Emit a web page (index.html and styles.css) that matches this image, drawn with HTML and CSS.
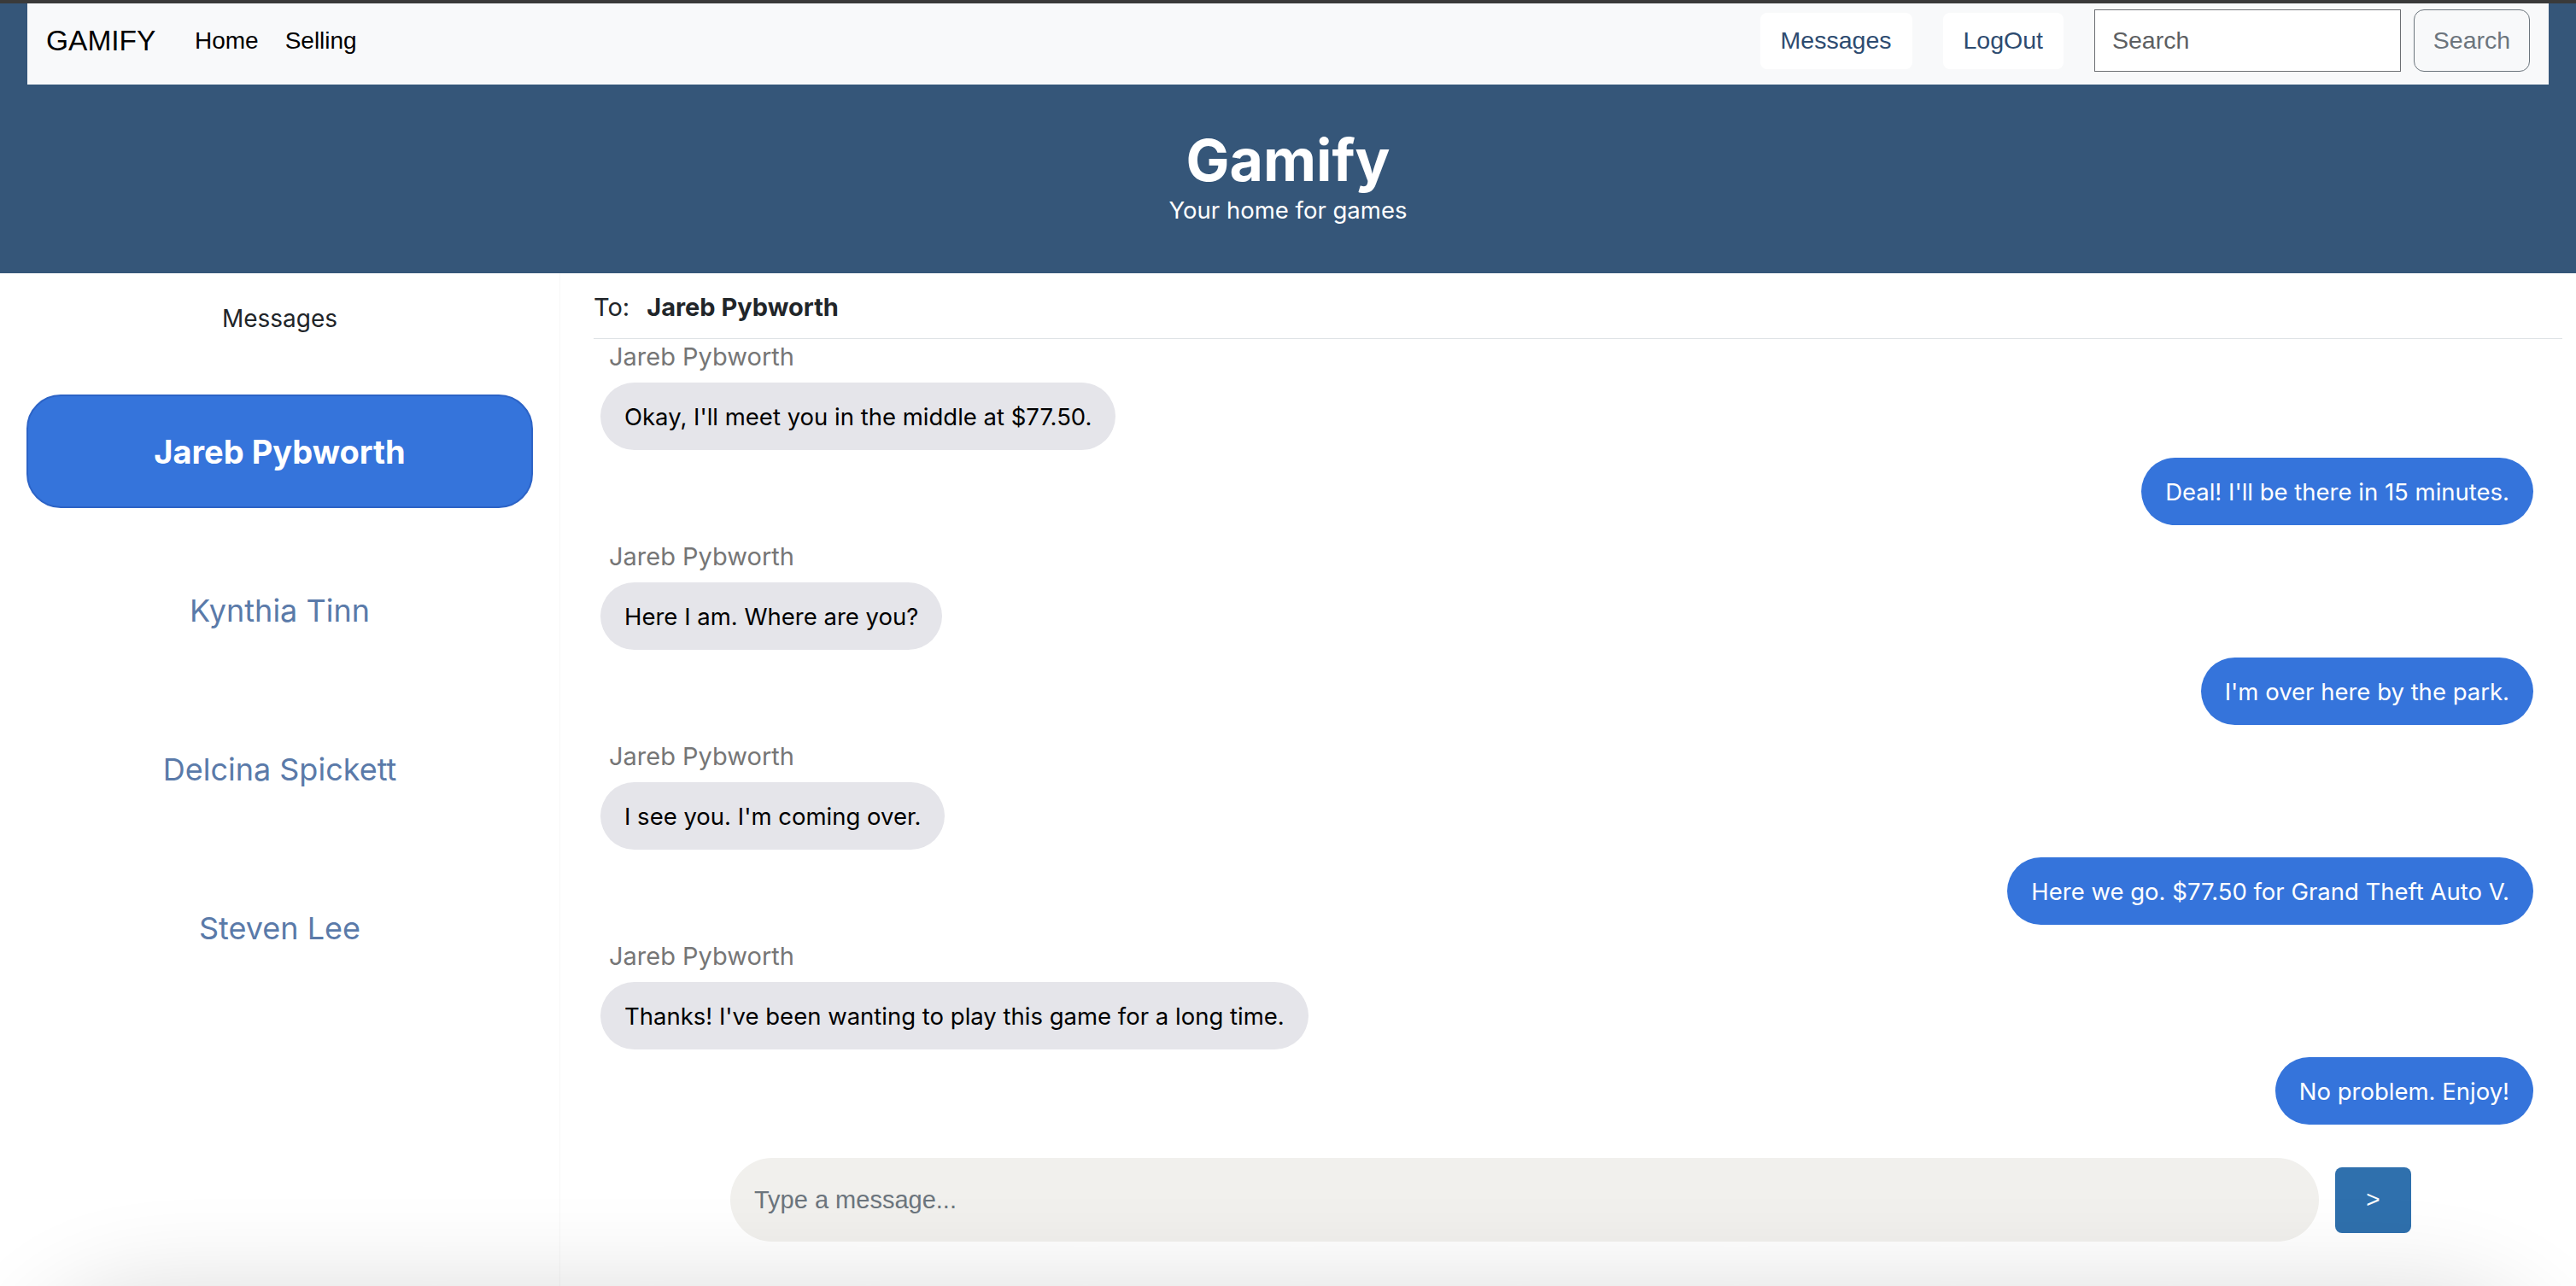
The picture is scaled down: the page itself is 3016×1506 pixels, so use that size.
FILE: index.html
```html
<!DOCTYPE html>
<html lang="en">
<head>
<meta charset="utf-8">
<title>Gamify - Messages</title>
<link rel="stylesheet" href="styles.css">
</head>
<body>
<div class="chrome"></div>
<header class="masthead">
  <nav class="navbar">
    <a class="brand" href="#">GAMIFY</a>
    <ul class="nav-links">
      <li><a href="#">Home</a></li>
      <li><a href="#">Selling</a></li>
    </ul>
    <div class="nav-right">
      <a class="nav-btn" href="#">Messages</a>
      <a class="nav-btn" href="#">LogOut</a>
      <form class="search">
        <input class="search-input" type="text" placeholder="Search">
        <button class="search-btn" type="button">Search</button>
      </form>
    </div>
  </nav>
  <div class="hero">
    <h1 class="hero-title">Gamify</h1>
    <p class="hero-sub">Your home for games</p>
  </div>
</header>
<main class="messenger">
  <aside class="sidebar">
    <h2 class="sidebar-title">Messages</h2>
    <ul class="contacts">
      <li class="contact active">Jareb Pybworth</li>
      <li class="contact">Kynthia Tinn</li>
      <li class="contact">Delcina Spickett</li>
      <li class="contact">Steven Lee</li>
    </ul>
  </aside>
  <section class="chat">
    <div class="chat-head"><span class="to">To:</span><strong class="to-name">Jareb Pybworth</strong></div>
    <div class="thread">
      <div class="sender">Jareb Pybworth</div>
      <div class="bubble in">Okay, I'll meet you in the middle at $77.50.</div>
      <div class="bubble out">Deal! I'll be there in 15 minutes.</div>
      <div class="sender">Jareb Pybworth</div>
      <div class="bubble in">Here I am. Where are you?</div>
      <div class="bubble out">I'm over here by the park.</div>
      <div class="sender">Jareb Pybworth</div>
      <div class="bubble in">I see you. I'm coming over.</div>
      <div class="bubble out">Here we go. $77.50 for Grand Theft Auto V.</div>
      <div class="sender">Jareb Pybworth</div>
      <div class="bubble in">Thanks! I've been wanting to play this game for a long time.</div>
      <div class="bubble out">No problem. Enjoy!</div>
    </div>
    <form class="compose">
      <input class="compose-input" type="text" placeholder="Type a message...">
      <button class="send-btn" type="button">&gt;</button>
    </form>
  </section>
</main>
<div class="window-shadow"></div>
</body>
</html>
```

FILE: styles.css
```css
* { box-sizing: border-box; }

html, body {
  margin: 0;
  padding: 0;
  height: 1506px;
  overflow: hidden;
  background: #ffffff;
}

body {
  font-family: "Inter", "Noto Sans", sans-serif;
  color: #212529;
  position: relative;
}

a { text-decoration: none; color: inherit; }
ul { list-style: none; margin: 0; padding: 0; }

.chrome {
  height: 4px;
  background: #3a3a3a;
}

.masthead {
  background: #355679;
  padding: 0 32px;
  height: 316px;
}

.navbar {
  height: 95px;
  background: #f8f9fa;
  display: flex;
  align-items: center;
  padding: 0 22px 8px 22px;
  font-family: "Liberation Sans", Arial, sans-serif;
}

.brand {
  font-size: 33.5px;
  color: #000;
  margin-right: 30px;
}

.nav-links {
  display: flex;
}

.nav-links a {
  display: block;
  font-size: 28px;
  color: #000;
  padding: 0 15.5px;
}

.nav-right {
  margin-left: auto;
  display: flex;
  align-items: center;
}

.nav-btn {
  height: 66px;
  display: flex;
  align-items: center;
  padding: 0 24px;
  background: #ffffff;
  border-radius: 8px;
  font-size: 28.5px;
  color: #2d4b70;
  margin-right: 36px;
}

.search {
  display: flex;
  align-items: center;
}

.search-input {
  width: 359px;
  height: 73px;
  border: 1.5px solid #6c6f73;
  border-radius: 0;
  background: #fff;
  padding: 0 20px;
  font-family: "Liberation Sans", Arial, sans-serif;
  font-size: 28.5px;
  color: #333;
  margin-right: 15px;
}

.search-input::placeholder { color: #5d5f62; }

.search-btn {
  width: 136px;
  height: 73px;
  border: 1.5px solid #6c757d;
  border-radius: 12px;
  background: transparent;
  font-family: "Liberation Sans", Arial, sans-serif;
  font-size: 28.5px;
  color: #6c757d;
  padding: 0;
}

.hero {
  text-align: center;
  color: #ffffff;
  padding-top: 47px;
}

.hero-title {
  margin: 0;
  font-size: 68px;
  font-weight: 700;
  line-height: 83px;
}

.hero-sub {
  margin: 0;
  font-size: 27.5px;
  line-height: 34px;
}

.messenger {
  display: flex;
  align-items: flex-start;
  height: 1186px;
}

.sidebar {
  width: 656px;
  flex: none;
  padding: 36px 31px 0 31px;
  border-right: 1px solid #f8f8f8;
  align-self: stretch;
}

.sidebar-title {
  margin: 0;
  text-align: center;
  font-size: 28px;
  font-weight: 400;
  line-height: 35px;
  color: #212529;
}

.contacts {
  margin-top: 71px;
}

.contact {
  height: 133px;
  margin-bottom: 53px;
  display: flex;
  align-items: center;
  justify-content: center;
  font-size: 36px;
  color: #5a7aa9;
  border: 2px solid transparent;
  border-radius: 40px;
}

.contact.active {
  background: #3574db;
  border-color: #2c63c6;
  color: #ffffff;
  font-weight: 700;
  font-size: 38px;
}

.chat {
  flex: 1;
  padding: 0 16px 0 39px;
  display: flex;
  flex-direction: column;
}

.chat-head {
  padding: 22px 0 18px 0;
  font-size: 29px;
  line-height: 36px;
  border-bottom: 1px solid #dee2e6;
  color: #212529;
}

.to { margin-right: 20px; }
.to-name { font-weight: 700; }

.thread {
  display: flex;
  flex-direction: column;
  padding-top: 3px;
}

.sender {
  margin-left: 18px;
  font-size: 29px;
  line-height: 35px;
  color: #767676;
}

.bubble {
  font-size: 27.5px;
  line-height: 42px;
  padding: 18.5px 28px;
  border-radius: 40px;
}

.bubble.in {
  align-self: flex-start;
  margin-left: 8px;
  margin-top: 13px;
  background: #e5e5ea;
  color: #000;
}

.bubble.out {
  align-self: flex-end;
  margin-right: 34px;
  margin-top: 9px;
  margin-bottom: 19px;
  background: #3574db;
  color: #ffffff;
}

.thread .bubble.out:last-child { margin-bottom: 0; }

.compose {
  display: flex;
  align-items: center;
  margin-top: 39px;
  padding: 0 177px 0 160px;
}

.compose-input {
  flex: 1;
  height: 98px;
  border: none;
  border-radius: 49px;
  background: #f1f0ed;
  padding: 0 28px;
  font-family: "Liberation Sans", Arial, sans-serif;
  font-size: 29px;
  color: #333;
}

.compose-input::placeholder { color: #6c757d; }

.send-btn {
  margin-left: 19px;
  width: 89px;
  height: 77px;
  border: none;
  border-radius: 8px;
  background: #2f70ad;
  color: #ffffff;
  font-family: "Liberation Sans", Arial, sans-serif;
  font-size: 28px;
  padding: 0;
}

.window-shadow {
  position: absolute;
  left: 0;
  right: 0;
  bottom: 0;
  height: 130px;
  overflow: hidden;
  pointer-events: none;
}

.window-shadow::before {
  content: "";
  position: absolute;
  left: 40px;
  right: 40px;
  top: 160px;
  height: 300px;
  border-radius: 140px;
  background: #ddd;
  box-shadow: 0 0 120px 20px rgba(0, 0, 0, 0.16);
}
```
